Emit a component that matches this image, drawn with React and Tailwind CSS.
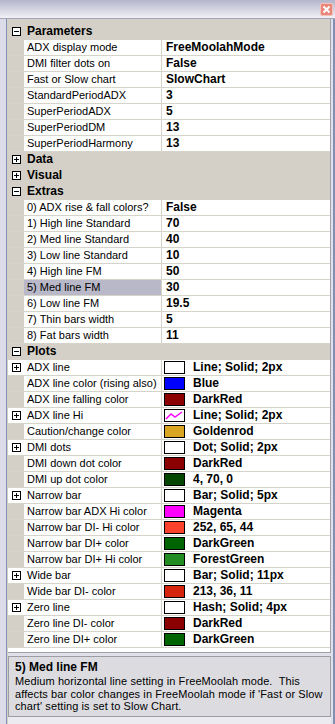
import React from "react";

// expand / collapse glyph, drawn like the classic property grid box
const Glyph = ({ open }) => (
  <svg width="9" height="9" viewBox="0 0 9 9" className="block">
    <rect x="0.5" y="0.5" width="8" height="8" fill="#fff" stroke="#000" />
    <line x1="2" y1="4.5" x2="7" y2="4.5" stroke="#000" />
    {!open && <line x1="4.5" y1="2" x2="4.5" y2="7" stroke="#000" />}
  </svg>
);

const Swatch = ({ color, zig }) => (
  <div
    className="w-[21px] h-[13px] border border-black shrink-0"
    style={{ backgroundColor: color || "#fff" }}
  >
    {zig && (
      <svg width="19" height="11" viewBox="0 0 19 11" className="block">
        <polyline points="1,9 6,4 10,7 17,2" fill="none" stroke="#ff00ff" strokeWidth="1.5" />
      </svg>
    )}
  </div>
);

const sections = [
  {
    name: "Parameters",
    open: true,
    rows: [
      ["ADX display mode", "FreeMoolahMode"],
      ["DMI filter dots on", "False"],
      ["Fast or Slow chart", "SlowChart"],
      ["StandardPeriodADX", "3"],
      ["SuperPeriodADX", "5"],
      ["SuperPeriodDM", "13"],
      ["SuperPeriodHarmony", "13"],
    ],
  },
  { name: "Data", open: false, rows: [] },
  { name: "Visual", open: false, rows: [] },
  {
    name: "Extras",
    open: true,
    rows: [
      ["0) ADX rise & fall colors?", "False"],
      ["1) High line Standard", "70"],
      ["2) Med line Standard", "40"],
      ["3) Low line Standard", "10"],
      ["4) High line FM", "50"],
      ["5) Med line FM", "30", { selected: true }],
      ["6) Low line FM", "19.5"],
      ["7) Thin bars width", "5"],
      ["8) Fat bars width", "11"],
    ],
  },
  {
    name: "Plots",
    open: true,
    rows: [
      ["ADX line", "Line; Solid; 2px", { expand: true, color: "#fff" }],
      ["ADX line color (rising also)", "Blue", { color: "#0000ff" }],
      ["ADX line falling color", "DarkRed", { color: "#8b0000" }],
      ["ADX line Hi", "Line; Solid; 2px", { expand: true, color: "#fff", zig: true }],
      ["Caution/change color", "Goldenrod", { color: "#daa520" }],
      ["DMI dots", "Dot; Solid; 2px", { expand: true, color: "#fff" }],
      ["DMI down dot color", "DarkRed", { color: "#8b0000" }],
      ["DMI up dot color", "4, 70, 0", { color: "#044600" }],
      ["Narrow bar", "Bar; Solid; 5px", { expand: true, color: "#fff" }],
      ["Narrow bar ADX Hi color", "Magenta", { color: "#ff00ff" }],
      ["Narrow bar DI- Hi color", "252, 65, 44", { color: "#fc412c" }],
      ["Narrow bar DI+ color", "DarkGreen", { color: "#006400" }],
      ["Narrow bar DI+ Hi color", "ForestGreen", { color: "#228b22" }],
      ["Wide bar", "Bar; Solid; 11px", { expand: true, color: "#fff" }],
      ["Wide bar DI- color", "213, 36, 11", { color: "#d5240b" }],
      ["Zero line", "Hash; Solid; 4px", { expand: true, color: "#fff" }],
      ["Zero line DI- color", "DarkRed", { color: "#8b0000" }],
      ["Zero line DI+ color", "DarkGreen", { color: "#006400" }],
    ],
  },
];

const Row = ({ label, value, opts = {} }) => (
  <div className="flex h-[16px] border-b border-[#d6d3cb]">
    <div className={"w-[16px] shrink-0 flex items-center pl-[4px] " + (opts.expand ? "bg-white" : "bg-[#d4d0c8]")}>
      {opts.expand && <Glyph open={false} />}
    </div>
    <div
      className={
        "w-[138px] shrink-0 border-r border-[#d6d3cb] pl-[3px] text-[11px] leading-[15px] whitespace-nowrap overflow-hidden " +
        (opts.selected ? "bg-[#b8b8c8]" : "bg-white")
      }
    >
      {label}
    </div>
    <div className="flex-1 bg-white flex items-center pl-[2px] gap-[8px] text-[12px] font-bold leading-[15px] whitespace-nowrap">
      {opts.color && <Swatch color={opts.color} zig={opts.zig} />}
      <span className={opts.color ? "" : "pl-[2px]"}>{value}</span>
    </div>
  </div>
);

export default function App() {
  return (
    <div className="w-[335px] h-[724px] bg-[#e0e0ea] overflow-hidden flex flex-col font-['Liberation_Sans',Arial,sans-serif] text-black">
      {/* title strip */}
      <div className="h-[19px] shrink-0 bg-gradient-to-b from-[#b4b4cc] to-[#f2f2f6] border-b border-[#a4a4b8] flex justify-end items-start pt-[3px] pr-[2px]">
        <div className="w-[13px] h-[13px] rounded-[2px] bg-[#e8867a] border border-[#f4c4bc] flex items-center justify-center">
          <svg width="9" height="9" viewBox="0 0 9 9">
            <path d="M1.5 1.5 L7.5 7.5 M7.5 1.5 L1.5 7.5" stroke="#fff" strokeWidth="2" />
          </svg>
        </div>
      </div>

      {/* body */}
      <div className="flex-1 flex">
        <div className="w-[6px] bg-[#dcdce8] shrink-0" />
        <div className="w-[1px] bg-[#7f93b8] shrink-0" />
        <div className="w-[1px] bg-[#d4d0c8] shrink-0" />
        <div className="flex-1 flex flex-col">
          {/* property grid */}
          <div className="h-[634px] bg-white border-r border-b border-[#a0a0a8] flex flex-col">
            <div className="h-[5px] bg-[#d4d0c8]" />
            {sections.map((s) => (
              <div key={s.name}>
                <div className="flex h-[16px] bg-[#d4d0c8] border-b border-[#d4d0c8] items-center">
                  <div className="w-[16px] shrink-0 pl-[4px]">
                    <Glyph open={s.open} />
                  </div>
                  <span className="pl-[3px] text-[12px] font-bold leading-[15px]">{s.name}</span>
                </div>
                {s.rows.map((r) => (
                  <Row key={r[0]} label={r[0]} value={r[1]} opts={r[2]} />
                ))}
              </div>
            ))}
          </div>

          {/* description panel */}
          <div className="mt-[3px] h-[61px] bg-[#dcdce0] border border-[#9c9ca4] pl-[6px] pt-[3px] overflow-hidden">
            <div className="text-[12px] font-bold leading-[15px]">5) Med line FM</div>
            <div className="text-[11px] leading-[12.5px] whitespace-nowrap tracking-[0.1px]">
              Medium horizontal line setting in FreeMoolah mode.&nbsp; This
              <br />
              affects bar color changes in FreeMoolah mode if 'Fast or Slow
              <br />
              chart' setting is set to Slow Chart.
            </div>
          </div>
          <div className="flex-1 bg-[#ececf0]" />
        </div>
        <div className="w-[2px] bg-[#e0e0ea] shrink-0" />
        <div className="w-[2px] bg-[#8090b4] shrink-0" />
      </div>
    </div>
  );
}
